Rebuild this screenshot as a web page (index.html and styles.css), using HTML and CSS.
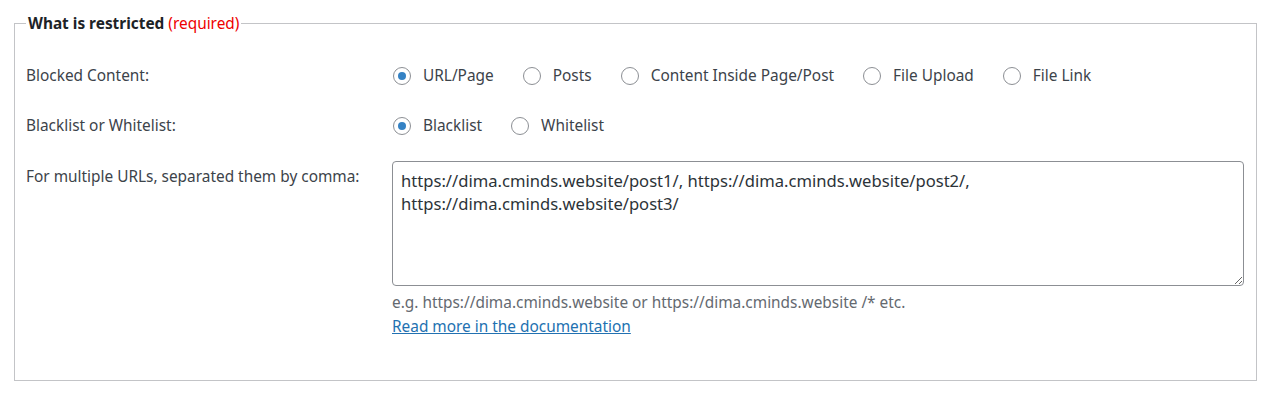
FILE: index.html
```html
<!DOCTYPE html>
<html>
<head>
<meta charset="utf-8">
<link rel="stylesheet" href="styles.css">
</head>
<body>
<div class="page">
  <fieldset class="box">
    <legend class="legend"><strong>What is restricted</strong> <span class="req">(required)</span></legend>
    <div class="row">
      <div class="label">Blocked Content:</div>
      <div class="options">
        <label class="opt"><input type="radio" name="bc" class="radio" checked> URL/Page</label>
        <label class="opt"><input type="radio" name="bc" class="radio"> Posts</label>
        <label class="opt"><input type="radio" name="bc" class="radio"> Content Inside Page/Post</label>
        <label class="opt"><input type="radio" name="bc" class="radio"> File Upload</label>
        <label class="opt"><input type="radio" name="bc" class="radio"> File Link</label>
      </div>
    </div>
    <div class="row">
      <div class="label">Blacklist or Whitelist:</div>
      <div class="options">
        <label class="opt"><input type="radio" name="bw" class="radio" checked> Blacklist</label>
        <label class="opt"><input type="radio" name="bw" class="radio"> Whitelist</label>
      </div>
    </div>
    <div class="row row-top">
      <div class="label label-top">For multiple URLs, separated them by comma:</div>
      <div class="field">
        <textarea class="urls">https://dima.cminds.website/post1/, https://dima.cminds.website/post2/, https://dima.cminds.website/post3/</textarea>
        <p class="help">e.g. https://dima.cminds.website or https://dima.cminds.website /* etc.</p>
        <a class="doc" href="#">Read more in the documentation</a>
      </div>
    </div>
  </fieldset>
</div>
</body>
</html>
```
FILE: styles.css
```css
html, body {
  margin: 0;
  padding: 0;
  background: #fff;
}
body {
  font-family: "Noto Sans", "Open Sans", "Liberation Sans", sans-serif;
  font-size: 15.4px;
  color: #3c434a;
}
.page {
  padding: 12px 13px 0 14px;
}
.box {
  margin: 0;
  border: 1px solid #c3c4c7;
  padding: 17px 12px 43px 11px;
  min-width: 0;
}
.legend {
  padding: 2px 2px 0;
  font-size: 15.4px;
  line-height: 20px;
}
.legend strong {
  color: #1d2327;
  font-weight: 700;
}
.req {
  color: #e00;
}
.row {
  display: grid;
  grid-template-columns: 366px 1fr;
  align-items: center;
  height: 50px;
}
.row-top {
  align-items: start;
  height: auto;
}
.label {
  line-height: 20px;
}
.label-top {
  padding-top: 16px;
}
.options {
  display: flex;
  align-items: center;
  gap: 28px;
}
.opt {
  display: flex;
  align-items: center;
  gap: 12px;
  line-height: 20px;
}
.radio {
  appearance: none;
  -webkit-appearance: none;
  margin: 0 0 0 1px;
  width: 18px;
  height: 18px;
  border: 1px solid #8c8f94;
  border-radius: 50%;
  background: #fff;
  display: grid;
  place-items: center;
  box-sizing: border-box;
}
.radio:checked::before {
  content: "";
  width: 8px;
  height: 8px;
  border-radius: 50%;
  background: #3582c4;
}
.field {
  padding-top: 10px;
}
.urls {
  display: block;
  box-sizing: border-box;
  width: 852px;
  height: 125px;
  border: 1px solid #8c8f94;
  border-radius: 4px;
  padding: 7px 8px;
  font-family: "Noto Sans", "Open Sans", sans-serif;
  font-size: 16.6px;
  line-height: 23px;
  color: #2c3338;
  resize: vertical;
}
.help {
  margin: 7px 0 0;
  color: #646970;
  line-height: 20px;
}
.doc {
  display: inline-block;
  margin-top: 4px;
  color: #2271b1;
  text-decoration: underline;
  line-height: 20px;
}
```
